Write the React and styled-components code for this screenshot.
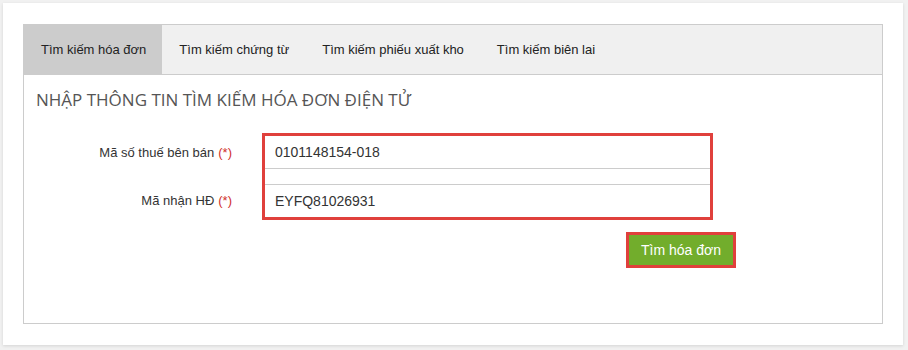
import styled, { createGlobalStyle } from "styled-components";

const GlobalStyle = createGlobalStyle`
  html, body {
    margin: 0;
    padding: 0;
    background: #f1f1f1;
  }
  body {
    font-family: "Liberation Sans", Arial, sans-serif;
  }
`;

const tabs = [
  "Tìm kiếm hóa đơn",
  "Tìm kiếm chứng từ",
  "Tìm kiếm phiếu xuất kho",
  "Tìm kiếm biên lai",
];

export default function App() {
  return (
    <>
      <GlobalStyle />
      <Page>
        <Card>
          <Panel>
            <TabBar>
              {tabs.map((t, i) => (
                <Tab key={t} active={i === 0}>
                  {t}
                </Tab>
              ))}
            </TabBar>
            <Heading>NHẬP THÔNG TIN TÌM KIẾM HÓA ĐƠN ĐIỆN TỬ</Heading>
            <Form>
              <Labels>
                <Label>
                  Mã số thuế bên bán <Req>(*)</Req>
                </Label>
                <Gap />
                <Label>
                  Mã nhận HĐ <Req>(*)</Req>
                </Label>
              </Labels>
              <Fields>
                <Input first defaultValue="0101148154-018" />
                <Gap />
                <Input defaultValue="EYFQ81026931" />
              </Fields>
            </Form>
            <ButtonRow>
              <ButtonFrame>
                <SearchButton>Tìm hóa đơn</SearchButton>
              </ButtonFrame>
            </ButtonRow>
          </Panel>
        </Card>
      </Page>
    </>
  );
}

const Page = styled.div`
  padding: 3px 5px 5px 3px;
`;

const Card = styled.div`
  background: #fff;
  padding: 21px 20px 21px 20px;
  box-shadow: 0 1px 3px rgba(0, 0, 0, 0.12);
`;

const Panel = styled.div`
  border: 1px solid #cccccc;
  height: 298px;
  box-sizing: content-box;
`;

const TabBar = styled.div`
  display: flex;
  background: #f0f0f0;
  border-bottom: 1px solid #cccccc;
  height: 49px;
`;

const Tab = styled.div`
  display: flex;
  align-items: center;
  padding: 0 16px 0 17px;
  font-size: 13px;
  color: #222;
  background: ${(p) => (p.active ? "#cccccc" : "transparent")};
`;

const Heading = styled.h1`
  margin: 0;
  padding: 14px 0 0 12px;
  font-family: "Open Sans", "Noto Sans", sans-serif;
  font-weight: 400;
  font-size: 17px;
  line-height: 22px;
  color: #555;
`;

const Form = styled.div`
  display: flex;
  margin-top: 22px;
`;

const Labels = styled.div`
  display: flex;
  flex-direction: column;
  width: 208px;
  padding-top: 3px;
  margin-right: 30px;
`;

const Label = styled.div`
  height: 33px;
  display: flex;
  align-items: center;
  justify-content: flex-end;
  font-size: 13px;
  color: #333;
`;

const Req = styled.span`
  color: #d0312d;
  margin-left: 4px;
`;

const Gap = styled.div`
  height: 15px;
`;

const Fields = styled.div`
  display: flex;
  flex-direction: column;
  width: 445px;
  border: 3px solid #e0403c;
`;

const Input = styled.input`
  height: 33px;
  box-sizing: border-box;
  border: none;
  ${(p) =>
    p.first
      ? "border-bottom: 1px solid #cccccc;"
      : "border-top: 1px solid #cccccc;"}
  padding: 0 10px;
  font-family: "Liberation Sans", Arial, sans-serif;
  font-size: 14px;
  color: #333;
  outline: none;
  background: #fff;
`;

const ButtonRow = styled.div`
  display: flex;
  justify-content: flex-end;
  padding-right: 146px;
  margin-top: 12px;
`;

const ButtonFrame = styled.div`
  border: 3px solid #e0403c;
`;

const SearchButton = styled.button`
  display: block;
  width: 104px;
  height: 30px;
  border: none;
  background: #72ad2c;
  color: #fff;
  font-family: "Liberation Sans", Arial, sans-serif;
  font-size: 14px;
  padding: 0;
  cursor: pointer;
`;
